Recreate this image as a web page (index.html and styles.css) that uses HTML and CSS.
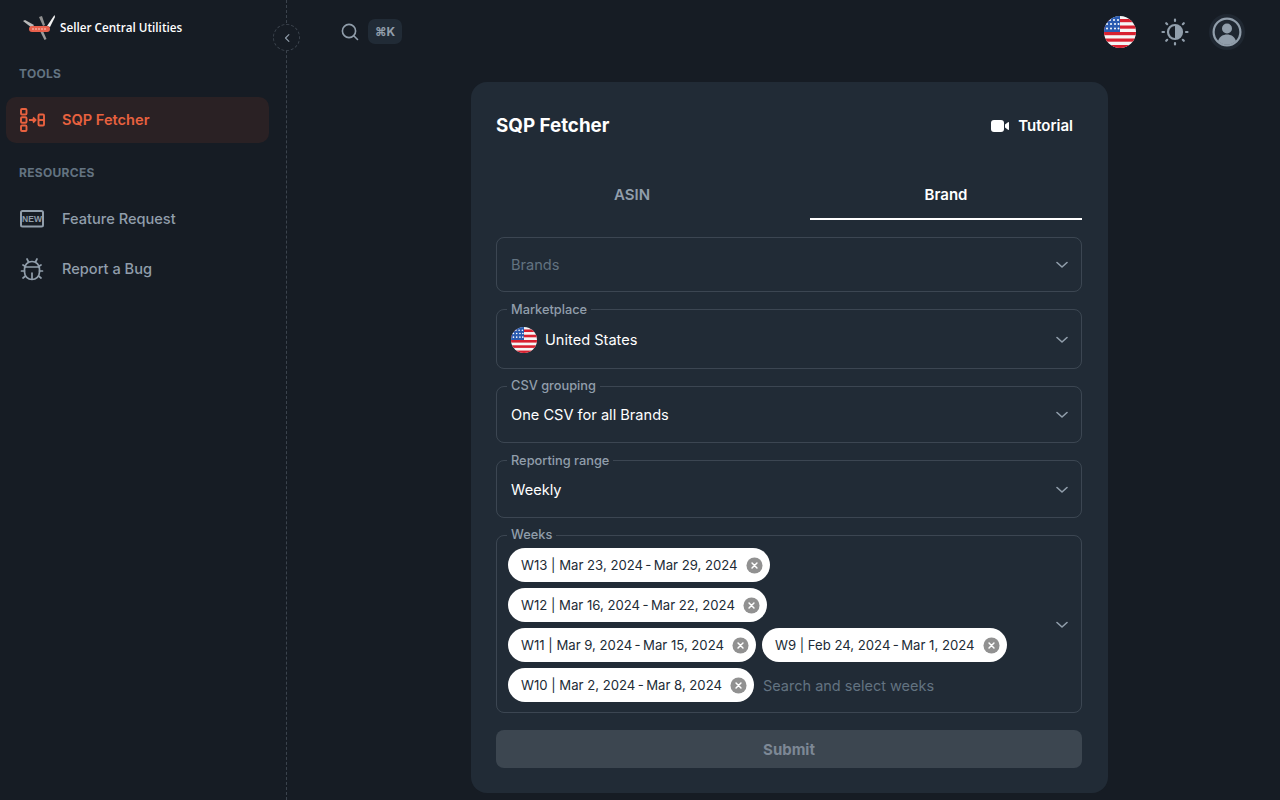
FILE: index.html
```html
<!DOCTYPE html>
<html lang="en">
<head>
    <meta charset="UTF-8">
    <meta name="viewport" content="width=device-width, initial-scale=1.0">
    <title>SQP Fetcher</title>
    <link rel="stylesheet" href="styles.css">
</head>
<body>
    <svg class="defs" width="0" height="0" aria-hidden="true">
        <defs>
            <clipPath id="flag-clip"><circle cx="16" cy="16" r="16"/></clipPath>
            <symbol id="flag-us" viewBox="0 0 32 32">
                <g clip-path="url(#flag-clip)">
                    <rect width="32" height="32" fill="#f5f5f5"/>
                    <rect y="3" width="32" height="3.2" fill="#d8202f"/>
                    <rect y="9.500" width="32" height="3.2" fill="#d8202f"/>
                    <rect y="16" width="32" height="3.2" fill="#d8202f"/>
                    <rect y="22.500" width="32" height="3.2" fill="#d8202f"/>
                    <rect y="29" width="32" height="3.2" fill="#d8202f"/>
                    <rect width="16" height="16" fill="#2a5bb0"/>
                    <g fill="#fff">
                        <circle cx="6" cy="4" r="1"/><circle cx="10" cy="4" r="1"/><circle cx="14" cy="4" r="1"/>
                        <circle cx="3" cy="8" r="1"/><circle cx="7" cy="8" r="1"/><circle cx="11" cy="8" r="1"/><circle cx="14.500" cy="8" r="1"/>
                        <circle cx="3" cy="12.500" r="1"/><circle cx="7" cy="12.500" r="1"/><circle cx="11" cy="12.500" r="1"/><circle cx="14.500" cy="12.500" r="1"/>
                    </g>
                </g>
            </symbol>
            <symbol id="chevron" viewBox="0 0 12 8">
                <path d="M1 1.500 6 6l5-4.500" fill="none" stroke="currentColor" stroke-width="1.600" stroke-linecap="round" stroke-linejoin="round"/>
            </symbol>
            <symbol id="chip-x" viewBox="0 0 18 18">
                <circle cx="9" cy="9" r="8.500" fill="#919191"/>
                <path d="M6.400 6.400l5.200 5.200M11.600 6.400l-5.200 5.200" stroke="#fff" stroke-width="1.600" stroke-linecap="round"/>
            </symbol>
        </defs>
    </svg>

    <div class="app">
        <!-- Sidebar -->
        <aside class="sidebar">
            <div class="brand">
                <svg class="brand-logo" viewBox="0 0 32 25">
                    <path d="M0 6 2 5l9 5-2 3z" fill="#b9b9b9"/>
                    <path d="M16 2l3-1 3 9-2 1z" fill="#8f8f8f"/>
                    <path d="M31.500 0 32 2l-5 10-3-1z" fill="#f2f2f2"/>
                    <path d="M17 16h3l3.500 8-2 1z" fill="#9a9a9a"/>
                    <rect x="6" y="11" width="21" height="6" rx="3" fill="#e8604c"/>
                    <path d="M9 14h15" stroke="#f6c9c0" stroke-width="1.200" stroke-dasharray="2 1"/>
                </svg>
                <span class="brand-name">Seller Central Utilities</span>
            </div>

            <div class="nav-title">TOOLS</div>
            <a class="nav-item active">
                <svg class="nav-icon" viewBox="0 0 26 26" fill="none" stroke="currentColor" stroke-width="1.900">
                    <rect x="1" y="2" width="5.500" height="5.500" rx="1"/>
                    <rect x="1" y="10.300" width="5.500" height="5.500" rx="1"/>
                    <rect x="1" y="18.500" width="5.500" height="5.500" rx="1"/>
                    <path d="M9 13h6.500M13 10.500l2.500 2.500-2.500 2.500"/>
                    <rect x="18.500" y="7.500" width="5.500" height="11" rx="1"/>
                    <path d="M18.500 13h5.500"/>
                </svg>
                <span>SQP Fetcher</span>
            </a>

            <div class="nav-title resources">RESOURCES</div>
            <a class="nav-item">
                <svg class="nav-icon" viewBox="0 0 26 26" fill="none">
                    <rect x="1" y="5" width="22" height="15.500" rx="1.500" stroke="currentColor" stroke-width="2"/>
                    <text x="12" y="16" text-anchor="middle" class="new-text">NEW</text>
                </svg>
                <span>Feature Request</span>
            </a>
            <a class="nav-item">
                <svg class="nav-icon" viewBox="0 0 26 26" fill="none" stroke="currentColor" stroke-width="1.700" stroke-linecap="round">
                    <path d="M4.500 13a7.500 7.500 0 0 1 15 0v3a7.500 7.500 0 0 1-15 0z"/>
                    <path d="M4.800 11h14.400M12 17v6M8.500 6 7 3M15.500 6 17 3"/>
                    <path d="M4.500 15H1.500M19.500 15h3M5.500 20l-2.500 2M18.500 20l2.500 2M5.500 10.500 3 9M18.500 10.500 21 9"/>
                </svg>
                <span>Report a Bug</span>
            </a>

            <button class="collapse-btn" type="button">
                <svg viewBox="0 0 8 12" width="6" height="10"><path d="M6.500 1.500 2 6l4.500 4.500" fill="none" stroke="#919eab" stroke-width="1.500" stroke-linecap="round" stroke-linejoin="round"/></svg>
            </button>
        </aside>

        <main class="main">
            <header class="topbar">
                <div class="search">
                    <svg width="20" height="20" viewBox="0 0 20 20" fill="none" stroke="#919eab" stroke-width="1.600" stroke-linecap="round"><circle cx="9" cy="9" r="6.600"/><path d="M14 14l3.500 3.500"/></svg>
                    <span class="kbd">⌘K</span>
                </div>
                <div class="topbar-right">
                    <svg class="top-flag"><use href="#flag-us"/></svg>
                    <svg class="top-sun" viewBox="0 0 30 30" fill="none" stroke="#919eab" stroke-width="2.200" stroke-linecap="round">
                        <circle cx="15" cy="15" r="7"/>
                        <path d="M15 8a7 7 0 0 1 0 14z" fill="#919eab" stroke="none"/>
                        <path d="M15 2.500v1.500M15 26v1.500M2.500 15H4M26 15h1.500M6.200 6.200l1 1M22.800 22.800l1 1M6.200 23.800l1-1M22.800 7.200l1-1"/>
                    </svg>
                    <span class="avatar">
                        <svg viewBox="0 0 30 30" width="30" height="30">
                            <circle cx="15" cy="15" r="13.400" fill="none" stroke="#919eab" stroke-width="2.200"/>
                            <circle cx="15" cy="11.500" r="5" fill="#919eab"/>
                            <path d="M6 24c1.500-4.500 5-6.500 9-6.500s7.500 2 9 6.500a13 13 0 0 1-18 0z" fill="#919eab"/>
                        </svg>
                    </span>
                </div>
            </header>

            <section class="card">
                <div class="card-head">
                    <h1>SQP Fetcher</h1>
                    <a class="tutorial">
                        <svg width="20" height="14" viewBox="0 0 20 14"><rect x="1" y="1" width="13" height="12" rx="3" fill="#fff"/><path d="M15 5.500 18 3.200c.6-.4 1-.2 1 .5v6.600c0 .7-.4.9-1 .5L15 8.500z" fill="#fff"/></svg>
                        <span>Tutorial</span>
                    </a>
                </div>

                <div class="tabs">
                    <div class="tab">ASIN</div>
                    <div class="tab selected">Brand</div>
                </div>

                <form class="form">
                    <fieldset class="field no-legend">
                        <div class="field-row">
                            <span class="placeholder">Brands</span>
                            <svg class="arrow"><use href="#chevron"/></svg>
                        </div>
                    </fieldset>

                    <fieldset class="field">
                        <legend>Marketplace</legend>
                        <div class="field-row">
                            <span class="value-flag">
                                <svg class="flag-small"><use href="#flag-us"/></svg>
                                United States
                            </span>
                            <svg class="arrow"><use href="#chevron"/></svg>
                        </div>
                    </fieldset>

                    <fieldset class="field">
                        <legend>CSV grouping</legend>
                        <div class="field-row">
                            <span>One CSV for all Brands</span>
                            <svg class="arrow"><use href="#chevron"/></svg>
                        </div>
                    </fieldset>

                    <fieldset class="field">
                        <legend>Reporting range</legend>
                        <div class="field-row">
                            <span>Weekly</span>
                            <svg class="arrow"><use href="#chevron"/></svg>
                        </div>
                    </fieldset>

                    <fieldset class="field weeks">
                        <legend>Weeks</legend>
                        <div class="field-row">
                            <div class="chips">
                                <span class="chip">W13 | Mar 23, 2024&#8201;-&#8201;Mar 29, 2024 <svg class="chip-close"><use href="#chip-x"/></svg></span>
                                <span class="chip">W12 | Mar 16, 2024&#8201;-&#8201;Mar 22, 2024 <svg class="chip-close"><use href="#chip-x"/></svg></span>
                                <span class="chip">W11 | Mar 9, 2024&#8201;-&#8201;Mar 15, 2024 <svg class="chip-close"><use href="#chip-x"/></svg></span>
                                <span class="chip">W9 | Feb 24, 2024&#8201;-&#8201;Mar 1, 2024 <svg class="chip-close"><use href="#chip-x"/></svg></span>
                                <span class="chip">W10 | Mar 2, 2024&#8201;-&#8201;Mar 8, 2024 <svg class="chip-close"><use href="#chip-x"/></svg></span>
                                <span class="placeholder search-weeks">Search and select weeks</span>
                            </div>
                            <svg class="arrow"><use href="#chevron"/></svg>
                        </div>
                    </fieldset>

                    <button class="submit" type="button" disabled>Submit</button>
                </form>
            </section>
        </main>
    </div>
</body>
</html>
```

FILE: styles.css
```css
* {
    box-sizing: border-box;
}

html, body {
    margin: 0;
    height: 100%;
    overflow: hidden;
}

body {
    font-family: "Inter", "Liberation Sans", sans-serif;
    background-color: #161c24;
    color: #fff;
}

.defs {
    position: absolute;
}

.app {
    display: flex;
    height: 100vh;
}

/* Sidebar */
.sidebar {
    position: relative;
    flex: 0 0 287px;
    border-right: 1px dashed rgba(145, 158, 171, 0.3);
    padding: 13px 17px 0 6px;
}

.brand {
    display: flex;
    align-items: center;
    gap: 5px;
    height: 28px;
    padding-left: 17px;
}

.brand-logo {
    width: 32px;
    height: 25px;
    flex-shrink: 0;
}

.brand-name {
    font-family: "Open Sans", sans-serif;
    font-size: 11.700px;
    font-weight: 600;
    white-space: nowrap;
}

.nav-title {
    margin: 24px 0 0 13px;
    height: 18px;
    line-height: 18px;
    font-size: 12px;
    font-weight: 700;
    letter-spacing: 0.3px;
    color: #637381;
}

.nav-title.resources {
    margin-top: 21px;
    margin-bottom: 13.500px;
}

.nav-item {
    display: flex;
    align-items: center;
    gap: 16px;
    height: 46px;
    margin-bottom: 4px;
    padding-left: 14px;
    border-radius: 10px;
    font-size: 14.600px;
    font-weight: 500;
    color: #919eab;
}

.nav-title + .nav-item.active {
    margin-top: 14px;
}

.nav-item.active {
    background-color: #2a2124;
    color: #e8613f;
    font-weight: 600;
}

.nav-icon {
    width: 26px;
    height: 26px;
    flex-shrink: 0;
}

.new-text {
    font-family: "Liberation Sans", sans-serif;
    font-size: 8.500px;
    font-weight: 700;
    fill: currentColor;
}

.collapse-btn {
    position: absolute;
    top: 24px;
    right: -14px;
    width: 27px;
    height: 27px;
    display: flex;
    align-items: center;
    justify-content: center;
    padding: 0;
    border: 1px dashed rgba(145, 158, 171, 0.3);
    border-radius: 50%;
    background-color: #161c24;
}

/* Main */
.main {
    flex: 1;
    min-width: 0;
    padding: 0 35px 0 53px;
}

.topbar {
    display: flex;
    align-items: center;
    justify-content: space-between;
    height: 63px;
    margin-bottom: 19px;
}

.search {
    display: flex;
    align-items: center;
    gap: 8px;
}

.kbd {
    width: 34px;
    height: 25px;
    display: flex;
    align-items: center;
    justify-content: center;
    border-radius: 7px;
    background-color: #212b36;
    font-size: 12px;
    font-weight: 700;
    color: #919eab;
}

.topbar-right {
    display: flex;
    align-items: center;
}

.top-flag {
    width: 32px;
    height: 32px;
    margin-right: 24px;
}

.top-sun {
    width: 30px;
    height: 30px;
    margin-right: 19px;
}

.avatar {
    width: 36px;
    height: 36px;
    display: flex;
    align-items: center;
    justify-content: center;
    border-radius: 50%;
    background-color: #1f2731;
}

/* Card */
.card {
    width: 637px;
    margin-left: 131px;
    padding: 25px 26px 25px 25px;
    border-radius: 16px;
    background-color: #212b36;
}

.card-head {
    display: flex;
    align-items: center;
    justify-content: space-between;
    height: 37px;
}

.card-head h1 {
    margin: 0;
    font-size: 18.800px;
    font-weight: 700;
}

.tutorial {
    display: flex;
    align-items: center;
    gap: 8px;
    padding-right: 9px;
    font-size: 15px;
    font-weight: 600;
}

.tabs {
    display: flex;
    justify-content: space-between;
    margin-top: 26px;
}

.tab {
    width: 272px;
    height: 50px;
    line-height: 49px;
    text-align: center;
    font-size: 15px;
    font-weight: 600;
    color: #919eab;
}

.tab.selected {
    border-bottom: 2px solid #fff;
    color: #fff;
}

/* Form */
.form {
    margin-top: 17px;
}

.field {
    margin: 9.500px 0 0;
    padding: 9px 14px 15px;
    min-width: 0;
    border: 1px solid rgba(145, 158, 171, 0.24);
    border-radius: 8px;
    font-size: 14.600px;
}

.field legend {
    margin-left: -4px;
    padding: 0 4px;
    height: 16px;
    line-height: 16px;
    font-size: 12.800px;
    font-weight: 500;
    color: #919eab;
}

.field.no-legend {
    margin-top: 0;
    padding: 14.500px 14px;
}

.field-row {
    display: flex;
    align-items: center;
    justify-content: space-between;
    min-height: 24px;
}

.value-flag {
    display: flex;
    align-items: center;
    gap: 8px;
}

.flag-small {
    width: 26px;
    height: 26px;
}

.placeholder {
    color: #637381;
}

.arrow {
    width: 12px;
    height: 8px;
    margin-right: -1px;
    color: #919eab;
}

.weeks {
    padding: 5px 14px 10px;
}

.chips {
    display: flex;
    flex-wrap: wrap;
    align-items: center;
    gap: 6px;
    max-width: 505px;
    margin-left: -3px;
}

.chip {
    display: inline-flex;
    align-items: center;
    justify-content: space-between;
    gap: 8px;
    height: 34px;
    padding: 0 7px 0 13px;
    border-radius: 17px;
    background-color: #fff;
    color: #212b36;
    font-size: 13.150px;
    white-space: nowrap;
}

.chip-close {
    width: 17px;
    height: 17px;
}

.search-weeks {
    margin-left: 3px;
    font-size: 14.500px;
}

.submit {
    display: block;
    width: 100%;
    height: 38px;
    margin-top: 17px;
    border: none;
    border-radius: 8px;
    background-color: #3c4650;
    color: #7d8895;
    font-family: inherit;
    font-size: 15px;
    font-weight: 700;
}
```
